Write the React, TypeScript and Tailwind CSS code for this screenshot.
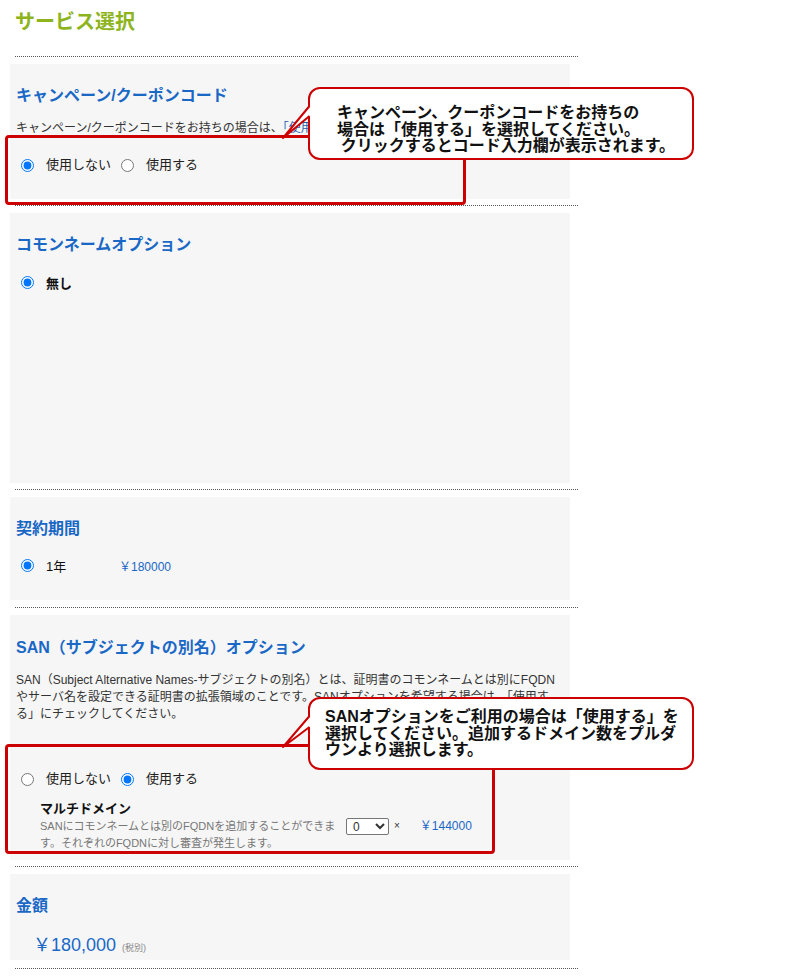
import React from "react";

const FONT = "font-['Liberation_Sans','Noto_Sans_CJK_JP',sans-serif]";

function Radio({ checked }: { checked: boolean }) {
  return (
    <input
      type="radio"
      readOnly
      checked={checked}
      className="m-0 w-[13px] h-[13px] shrink-0"
    />
  );
}

function Dotted() {
  return <div className="ml-[15px] w-[563px] border-t border-dotted border-[#555]" />;
}

function Heading({ children }: { children: React.ReactNode }) {
  return (
    <h2 className="text-[16px] leading-[24px] font-bold text-[#1a68c6]">{children}</h2>
  );
}

export default function App() {
  return (
    <div className={`relative w-[800px] h-[980px] bg-white text-[#333] ${FONT}`}>
      <h1 className="pt-[8px] pl-[15px] text-[20px] leading-[28px] font-bold text-[#8db41c]">
        サービス選択
      </h1>
      <div className="mt-[20px]">
        <Dotted />
      </div>

      {/* Campaign */}
      <div className="mt-[7px]">
        <div className="ml-[10px] w-[560px] h-[135px] bg-[#f6f6f6] pl-[6px] pt-[20px]">
          <Heading>キャンペーン/クーポンコード</Heading>
          <p className="mt-[11px] text-[12px] leading-[18px] whitespace-nowrap">
            キャンペーン/クーポンコードをお持ちの場合は、<span className="text-[#1f5fae]">「使用する」</span>を選択してください。
          </p>
          <div className="mt-[18px] flex items-center h-[20px] pl-[5px] text-[13px] text-[#222]">
            <Radio checked />
            <span className="ml-[12px]">使用しない</span>
            <span className="ml-[10px] flex"><Radio checked={false} /></span>
            <span className="ml-[12px]">使用する</span>
          </div>
        </div>
      </div>
      <div className="mt-[6px]">
        <Dotted />
      </div>

      {/* Common name */}
      <div className="mt-[7px]">
        <div className="ml-[10px] w-[560px] h-[270px] bg-[#f6f6f6] pl-[6px] pt-[20px]">
          <Heading>コモンネームオプション</Heading>
          <div className="mt-[17px] flex items-center h-[20px] pl-[5px] text-[13px] font-bold text-[#111]">
            <span className="-mt-[4px] flex"><Radio checked /></span>
            <span className="ml-[12px]">無し</span>
          </div>
        </div>
      </div>
      <div className="mt-[6px]">
        <Dotted />
      </div>

      {/* Contract */}
      <div className="mt-[7px]">
        <div className="ml-[10px] w-[560px] h-[103px] bg-[#f6f6f6] pl-[6px] pt-[20px]">
          <Heading>契約期間</Heading>
          <div className="mt-[16px] flex items-center h-[20px] pl-[5px] text-[13px] text-[#111]">
            <span className="-mt-[4px] flex"><Radio checked /></span>
            <span className="ml-[12px] w-[73px]">1年</span>
            <span className="text-[12px] text-[#1a68c6]">￥180000</span>
          </div>
        </div>
      </div>
      <div className="mt-[7px]">
        <Dotted />
      </div>

      {/* SAN */}
      <div className="mt-[7px]">
        <div className="ml-[10px] w-[560px] h-[245px] bg-[#f6f6f6] pl-[6px] pt-[21px]">
          <Heading>SAN（サブジェクトの別名）オプション</Heading>
          <p className="mt-[12px] text-[12px] leading-[17px] whitespace-nowrap">
            SAN（Subject Alternative Names-サブジェクトの別名）とは、証明書のコモンネームとは別にFQDN
            <br />
            やサーバ名を設定できる証明書の拡張領域のことです。SANオプションを希望する場合は、「使用す
            <br />
            る」にチェックしてください。
          </p>
          <div className="mt-[46px] flex items-center h-[20px] pl-[5px] text-[13px] text-[#222]">
            <Radio checked={false} />
            <span className="ml-[12px]">使用しない</span>
            <span className="ml-[10px] flex"><Radio checked /></span>
            <span className="ml-[12px]">使用する</span>
          </div>
          <div className="mt-[11px] pl-[24px]">
            <div className="text-[13px] leading-[18px] font-bold text-[#111]">マルチドメイン</div>
            <div className="flex items-start">
              <div className="w-[306px] text-[11px] leading-[17px] text-[#777] whitespace-nowrap">
                SANにコモンネームとは別のFQDNを追加することができま
                <br />
                す。それぞれのFQDNに対し審査が発生します。
              </div>
              <select
                defaultValue="0"
                className="w-[43px] h-[17px] text-[12px] leading-[15px] text-[#333] bg-white border border-[#767676] rounded-[2px] pl-[2px]"
              >
                <option value="0">0</option>
                <option value="1">1</option>
              </select>
              <span className="ml-[5px] text-[10px] leading-[15px] text-[#333]">×</span>
              <span className="ml-[20px] text-[12px] leading-[17px] text-[#1a68c6]">￥144000</span>
            </div>
          </div>
        </div>
      </div>
      <div className="mt-[6px]">
        <Dotted />
      </div>

      {/* Total */}
      <div className="mt-[7px]">
        <div className="ml-[10px] w-[560px] h-[86px] bg-[#f6f6f6] pl-[6px] pt-[20px]">
          <Heading>金額</Heading>
          <div className="mt-[15px] pl-[17px] flex items-baseline text-[#1a68c6]">
            <span className="text-[18px] leading-[24px]">￥180,000</span>
            <span className="ml-[6px] text-[9px] text-[#888]">(税別)</span>
          </div>
        </div>
      </div>
      <div className="mt-[8px]">
        <Dotted />
      </div>

      {/* Annotation overlays */}
      <div className="absolute left-[5px] top-[135px] w-[461px] h-[70px] border-[3px] border-[#cc0000] rounded-[4px]" />
      <div className="absolute left-[5px] top-[744px] w-[490px] h-[110px] border-[3px] border-[#cc0000] rounded-[4px]" />

      <div className="absolute left-[308px] top-[87px] w-[386px] h-[73px] border-2 border-[#cc0000] rounded-[12px] bg-white pl-[27px] pt-[14px] text-[16px] leading-[16.5px] font-bold text-[#111] whitespace-nowrap font-['Noto_Sans_CJK_JP',sans-serif]">
        キャンペーン、クーポンコードをお持ちの
        <br />
        場合は「使用する」を選択してください。
        <br />
        &nbsp;クリックするとコード入力欄が表示されます。
      </div>
      <svg className="absolute left-[280px] top-[100px]" width="32" height="42" viewBox="0 0 32 42">
        <polygon points="30,6 3,38 30,16" fill="#ffffff" />
        <polyline points="29.5,6 3,38 29.5,16" fill="none" stroke="#cc0000" strokeWidth="2" strokeLinejoin="round" />
      </svg>

      <div className="absolute left-[308px] top-[697px] w-[386px] h-[73px] border-2 border-[#cc0000] rounded-[12px] bg-white pl-[15px] pt-[10px] text-[16px] leading-[16.5px] font-bold text-[#111] whitespace-nowrap font-['Liberation_Sans','Noto_Sans_CJK_JP',sans-serif]">
        SANオプションをご利用の場合は「使用する」を
        <br />
        選択してください。追加するドメイン数をプルダ
        <br />
        ウンより選択します。
      </div>
      <svg className="absolute left-[280px] top-[710px]" width="32" height="42" viewBox="0 0 32 42">
        <polygon points="30,6 3,37 30,17" fill="#ffffff" />
        <polyline points="29.5,6 3,37 29.5,17" fill="none" stroke="#cc0000" strokeWidth="2" strokeLinejoin="round" />
      </svg>
    </div>
  );
}
